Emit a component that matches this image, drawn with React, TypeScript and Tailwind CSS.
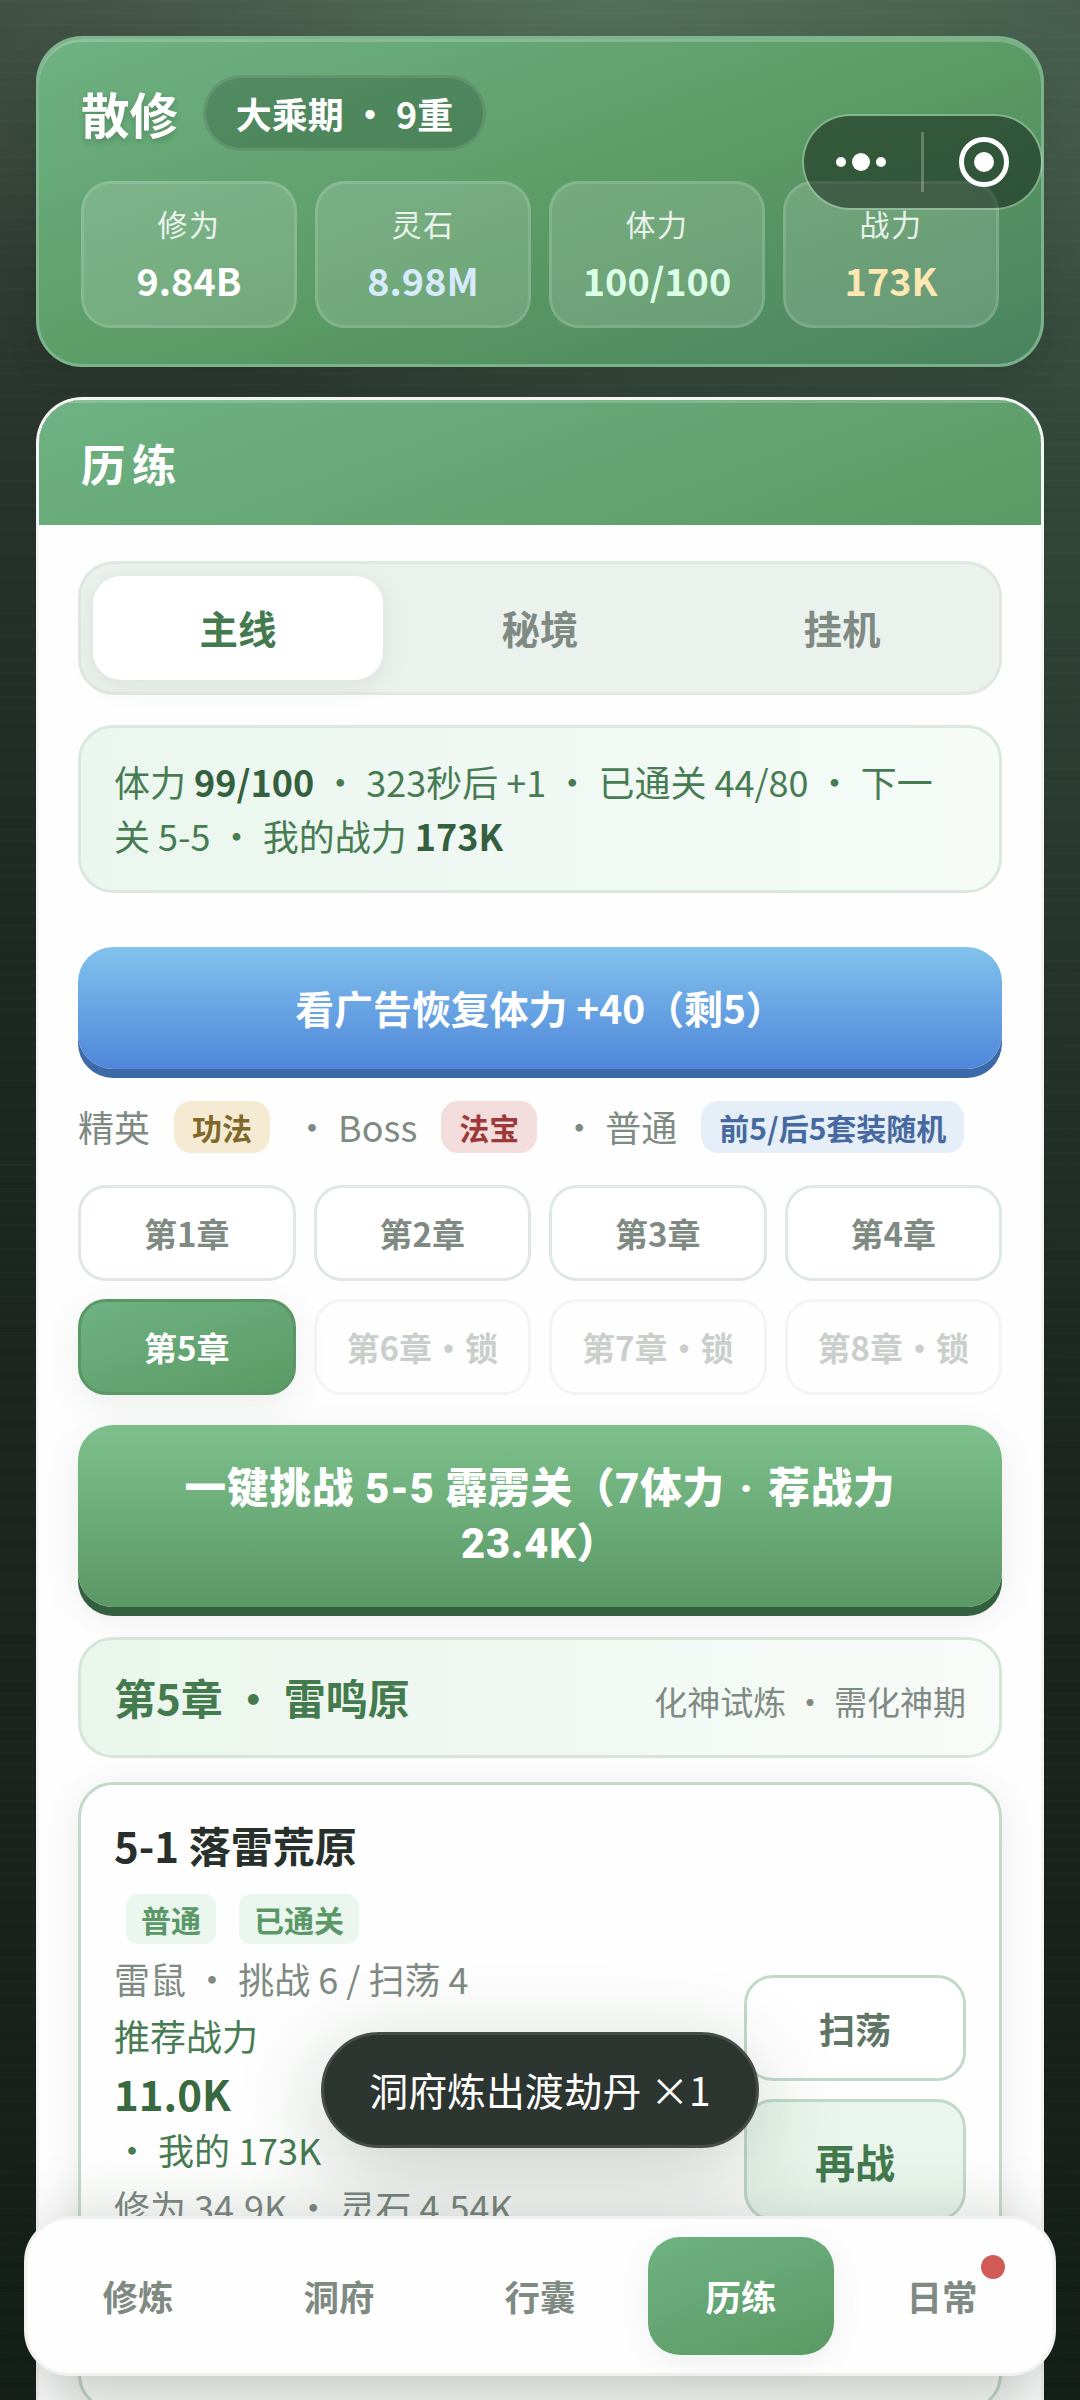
import type { ReactNode } from "react";
import clsx from "clsx";

const stats = [
  { label: "修为", value: "9.84B", color: "text-white" },
  { label: "灵石", value: "8.98M", color: "text-[#d6eafc]" },
  { label: "体力", value: "100/100", color: "text-[#dcffe8]" },
  { label: "战力", value: "173K", color: "text-[#fde7b3]" },
];

const chapters = [
  { name: "第1章" },
  { name: "第2章" },
  { name: "第3章" },
  { name: "第4章" },
  { name: "第5章", active: true },
  { name: "第6章・锁", locked: true },
  { name: "第7章・锁", locked: true },
  { name: "第8章・锁", locked: true },
];

const tabs = ["主线", "秘境", "挂机"];
const navItems = ["修炼", "洞府", "行囊", "历练", "日常"];

function StatusCard() {
  return (
    <section className="h-[331px] rounded-[46px] border-[3px] border-[#7fb68f]/90 bg-[linear-gradient(160deg,#6fb283_0%,#5a9a64_55%,#4a835e_100%)] bg-origin-border px-[42px] py-9 shadow-[inset_0_3px_0_rgba(255,255,255,0.22),0_12px_36px_rgba(0,0,0,0.08)]">
      <div className="flex h-[76px] items-center">
        <h1 className="text-[48.5px] leading-none font-bold text-white [text-shadow:0_3px_6px_rgba(0,0,0,0.2)]">散修</h1>
        <span className="ml-[25px] flex h-[76px] w-[283px] items-center justify-center rounded-full border-[3px] border-white/10 bg-[#2f5a3c]/40 pb-[1px] text-[36px] font-bold whitespace-nowrap text-white">
          大乘期 ・ 9重
        </span>
      </div>
      <div className="mt-[30px] grid grid-cols-4 gap-[18px]">
        {stats.map((stat) => (
          <div
            key={stat.label}
            className="flex h-[147px] flex-col items-center rounded-[30px] border-[3px] border-white/12 bg-white/15 pt-[17px]"
          >
            <span className="text-[30px] leading-[44px] tracking-[1.5px] text-white/85">{stat.label}</span>
            <span className={clsx("mt-[7px] text-[37.8px] leading-[56px] font-bold", stat.color)}>{stat.value}</span>
          </div>
        ))}
      </div>
    </section>
  );
}

function Capsule() {
  return (
    <div className="absolute top-[114px] left-[802px] flex h-[96px] w-[241px] items-center rounded-full border-2 border-white/25 bg-black/42 bg-clip-padding">
      <div className="flex flex-1 items-center justify-center gap-[6px] pr-[3px]">
        <i className="size-[10px] rounded-full bg-white" />
        <i className="size-[18px] rounded-full bg-white" />
        <i className="size-[10px] rounded-full bg-white" />
      </div>
      <div className="h-[60px] w-[3px] bg-white/25" />
      <div className="flex flex-1 items-center justify-center pl-[3px]">
        <div className="flex size-[50px] items-center justify-center rounded-full border-[5px] border-white">
          <i className="size-[20px] rounded-full bg-white" />
        </div>
      </div>
    </div>
  );
}

function DropTag({ className, children }: { className: string; children: ReactNode }) {
  return (
    <span className={clsx("flex h-[52px] items-center rounded-[17px] px-[18px] text-[30px] font-bold", className)}>
      {children}
    </span>
  );
}

function StageCard() {
  return (
    <article className="mt-6 flex h-[628px] items-center justify-between rounded-[35px] border-[3px] border-[#c3d9ca] bg-[#fdfefd] px-[33px] shadow-[0_6px_36px_rgba(30,60,40,0.10)]">
      <div className="flex h-full flex-col items-start pt-[31px]">
        <h3 className="text-[42px] leading-[58px] font-bold text-[#27302b]">5-1 落雷荒原</h3>
        <div className="mt-[20px] ml-[12px] flex gap-[23px]">
          <span className="flex h-[50px] items-center rounded-[12px] bg-[#ebf6ee] px-[15px] text-[30px] font-bold text-[#5a9867]">普通</span>
          <span className="flex h-[50px] items-center rounded-[12px] bg-[#ebf6ee] px-[15px] text-[30px] font-bold text-[#5a9867]">已通关</span>
        </div>
        <div className="mt-[6px] text-[36px] leading-[57px] whitespace-pre text-[#7f8a83]">
          <p>雷鼠 ・ 挑战 6 / 扫荡 4</p>
          <p className="text-[#477c52]">推荐战力</p>
          <p className="text-[42px] font-bold text-[#39693f]">11.0K</p>
          <p className="text-[#477c52]">・ 我的 173K</p>
          <p>修为 34.9K ・ 灵石 4.54K</p>
        </div>
      </div>
      <div className="flex w-[222px] flex-col gap-[18px] pt-1">
        <button className="h-[106px] rounded-[29px] border-[3px] border-[#c3d9ca] bg-white text-[36px] font-bold text-[#5f7566]">扫荡</button>
        <button className="h-[122px] rounded-[29px] border-[3px] border-[#c3d9ca] bg-[#eaf6ed] pt-[2px] text-[40px] font-bold text-[#437a4e]">再战</button>
      </div>
    </article>
  );
}

function AdventurePanel() {
  return (
    <section className="mt-[30px] h-[2100px] overflow-hidden rounded-t-[46px] border-[3px] border-white/95 bg-[#fefefe] bg-clip-padding">
      <header className="flex h-[125px] items-center bg-[linear-gradient(160deg,#6fb283_0%,#5a9a64_100%)] px-[42px] pt-[2px] shadow-[inset_0_3px_0_rgba(255,255,255,0.18)]">
        <h2 className="text-[44.5px] leading-none font-bold tracking-[6.5px] text-white">历练</h2>
      </header>

      <div className="px-[39px] pt-9">
        <div className="flex h-[134px] gap-3 rounded-[36px] border-[3px] border-[#e1e8e2] bg-[#ebf1ed] p-3">
          {tabs.map((tab, index) => (
            <button
              key={tab}
              className={clsx(
                "flex-1 rounded-[28px] text-[38.5px] font-bold",
                index === 0 ? "bg-white text-[#437a4e] shadow-[0_6px_28px_rgba(40,80,50,0.08)]" : "text-[#7f8a83]"
              )}
            >
              {tab}
            </button>
          ))}
        </div>

        <div className="mt-[30px] flex h-[168px] items-center rounded-[35px] border-[3px] border-[#dae8df] bg-[linear-gradient(90deg,#eaf6ee,#f6fbf8)] px-[33px] pb-[2px]">
          <p className="text-[36px] leading-[54px] whitespace-nowrap text-[#477c52]">
            体力 <b className="text-[#35603f]">99/100</b> ・ 323秒后 +1 ・ 已通关 44/80 ・ 下一
            <br />
            关 5-5 ・ 我的战力 <b className="text-[#35603f]">173K</b>
          </p>
        </div>

        <button className="mt-[54px] block h-[122px] w-full rounded-[35px] bg-linear-to-b from-[#82c2ec] to-[#4f86d9] pb-[2px] text-[38.9px] font-bold text-white shadow-[0_9px_0_#3c6aa8]">
          看广告恢复体力 +40（剩5）
        </button>

        <div className="mt-8 flex h-[52px] items-center text-[36px] whitespace-pre text-[#7f8a83]">
          <span className="mr-[24px] pb-[3px]">精英</span>
          <DropTag className="bg-[#f4ebd2] text-[#80682a]">功法</DropTag>
          <span className="mr-[24px] ml-[24px] pb-[3px]">・ Boss</span>
          <DropTag className="bg-[#f3dddd] text-[#9c3a3a]">法宝</DropTag>
          <span className="mr-[24px] ml-[24px] pb-[3px]">・ 普通</span>
          <DropTag className="bg-[#e6eef8] text-[#466a9f]">前5/后5套装随机</DropTag>
        </div>

        <div className="mt-8 grid grid-cols-4 gap-[18px]">
          {chapters.map((chapter) => (
            <button
              key={chapter.name}
              className={clsx(
                "h-24 rounded-[28px] border-[3px] pt-[2px] text-[33px] font-bold whitespace-nowrap",
                chapter.active
                  ? "border-[#5a9666] bg-[linear-gradient(160deg,#6fb283,#5a9a64)] text-white shadow-[0_9px_34px_rgba(40,80,50,0.09)]"
                  : "border-[#e1e8e2] bg-white text-[#7f8a83]",
                chapter.locked && "opacity-40"
              )}
            >
              {chapter.name}
            </button>
          ))}
        </div>

        <button className="mt-[30px] block h-[182px] w-full rounded-[35px] bg-linear-to-b from-[#7dc08b] to-[#5a9866] font-['Roboto','Noto_Sans_CJK_SC',sans-serif] text-[41.6px] leading-[55px] font-black tracking-[0.8px] whitespace-nowrap text-white shadow-[0_9px_0_#35603f,0_9px_36px_rgba(30,60,40,0.10)]">
          一键挑战 5-5 霹雳关（7体力 <span className="inline-flex w-[21px] justify-center">·</span> 荐战力
          <br />
          23.4K）
        </button>

        <div className="mt-[30px] flex h-[121px] items-center justify-between rounded-[35px] border-[3px] border-[#d5e6d9] bg-[linear-gradient(90deg,#eaf6ec,#f8fbf8)] px-[33px]">
          <h3 className="pb-[2px] text-[42px] font-bold text-[#437a4e]">第5章 ・ 雷鸣原</h3>
          <span className="pt-[8px] text-[33px] text-[#7f8a83]">化神试炼 ・ 需化神期</span>
        </div>

        <StageCard />
      </div>
    </section>
  );
}

function BottomNav() {
  return (
    <nav className="absolute top-[2216px] left-6 flex h-[160px] w-[1032px] gap-[15px] rounded-[46px] border-[3px] border-[#f0f1f0] bg-[#fefefe] p-[18px] shadow-[0_18px_80px_rgba(20,40,25,0.28)]">
      {navItems.map((item) => (
        <button
          key={item}
          className={clsx(
            "relative flex-1 rounded-[32px] text-[35.5px] font-bold",
            item === "历练"
              ? "bg-[linear-gradient(160deg,#6fb283,#5a9a64)] text-white shadow-[0_6px_30px_rgba(40,80,50,0.09)]"
              : "text-[#7f8a83]"
          )}
        >
          {item}
          {item === "日常" && <i className="absolute top-[18px] right-[30px] size-6 rounded-full bg-[#d15b56]" />}
        </button>
      ))}
    </nav>
  );
}

export default function App() {
  return (
    <div className="relative h-[2400px] w-[1080px] overflow-hidden bg-[repeating-linear-gradient(180deg,rgba(255,255,255,0.015)_0_2px,transparent_2px_12px),radial-gradient(760px_420px_at_56%_0%,rgba(98,140,108,0.55),transparent),radial-gradient(900px_1100px_at_100%_15%,rgba(75,115,90,0.34),transparent),linear-gradient(180deg,#3c483f_0%,#27332b_18%,#1e2822_40%,#1a231e_70%,#151e19_100%)] px-9 pt-9 font-['Noto_Sans_CJK_SC',sans-serif]">
      <StatusCard />
      <AdventurePanel />
      <Capsule />
      <div className="absolute top-[2032px] left-[321px] flex h-[116px] w-[438px] items-center justify-center rounded-full border-[3px] border-[#464d48] bg-[#2d3530] pb-[2px] text-[38.9px] whitespace-nowrap text-white shadow-[0_24px_90px_rgba(20,40,25,0.22)]">
        洞府炼出渡劫丹 ×1
      </div>
      <BottomNav />
    </div>
  );
}
